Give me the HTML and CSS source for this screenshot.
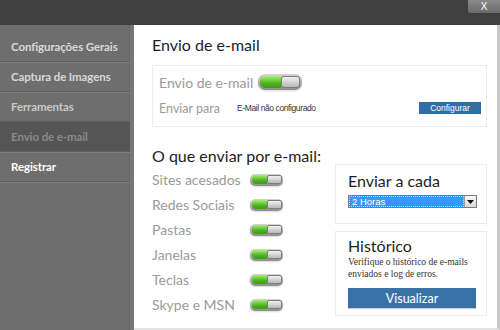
FILE: index.html
```html
<!DOCTYPE html>
<html lang="pt-BR">

<head>
    <meta charset="UTF-8">
    <meta name="viewport" content="width=device-width, initial-scale=1.0">
    <title>Envio de e-mail</title>
    <link rel="stylesheet" href="styles.css">
</head>

<body>
    <!-- barra superior -->
    <div class="top-bar">
        <button class="close-btn">X</button>
    </div>

    <div class="main">
        <!-- menu lateral -->
        <ul class="side-menu">
            <li class="item-1">Configurações Gerais</li>
            <li class="item-2">Captura de Imagens</li>
            <li class="item-3">Ferramentas</li>
            <li class="active">Envio de e-mail</li>
            <li class="register">Registrar</li>
        </ul>

        <!-- conteúdo -->
        <div class="content">
            <h1 class="title">Envio de e-mail</h1>

            <div class="box send-box">
                <div class="send-row">
                    <span class="send-label">Envio de e-mail</span>
                    <span class="toggle"><span class="on"></span><span class="knob"></span></span>
                </div>
                <div class="to-row">
                    <span class="to-label">Enviar para</span>
                    <span class="to-value">E-Mail não configurado</span>
                    <button class="btn-small">Configurar</button>
                </div>
            </div>

            <div class="columns">
                <div class="what">
                    <h2 class="title">O que enviar por e-mail:</h2>
                    <div class="opt"><span>Sites acesados</span><span class="toggle small"><span class="on"></span><span class="knob"></span></span></div>
                    <div class="opt"><span>Redes Sociais</span><span class="toggle small"><span class="on"></span><span class="knob"></span></span></div>
                    <div class="opt"><span>Pastas</span><span class="toggle small"><span class="on"></span><span class="knob"></span></span></div>
                    <div class="opt"><span>Janelas</span><span class="toggle small"><span class="on"></span><span class="knob"></span></span></div>
                    <div class="opt"><span>Teclas</span><span class="toggle small"><span class="on"></span><span class="knob"></span></span></div>
                    <div class="opt"><span>Skype e MSN</span><span class="toggle small"><span class="on"></span><span class="knob"></span></span></div>
                </div>

                <div class="side-boxes">
                    <div class="box interval-box">
                        <h3 class="box-title">Enviar a cada</h3>
                        <div class="select">
                            <span class="select-value">2 Horas</span>
                            <span class="select-arrow">
                                <svg width="7" height="4" viewBox="0 0 7 4"><path d="M0 0h7L3.5 4z" fill="#111"/></svg>
                            </span>
                        </div>
                    </div>
                    <div class="box history-box">
                        <h3 class="box-title">Histórico</h3>
                        <p class="history-text">Verifique o histórico de e-mails<br>enviados e log de erros.</p>
                        <button class="btn-big">Visualizar</button>
                    </div>
                </div>
            </div>
        </div>
    </div>
</body>
</html>
```

FILE: styles.css
```css
    /* base */
    body {
        margin: 0;
        width: 500px;
        height: 330px;
        overflow: hidden;
        font-family: 'Lato', 'Liberation Sans', sans-serif;
        background: #3f3f3f;
    }

    h1, h2, h3, p, ul {
        margin: 0;
        padding: 0;
    }

    button {
        font-family: inherit;
        border: none;
        cursor: pointer;
    }

    /* barra superior */
    .top-bar {
        height: 25px;
        display: flex;
        justify-content: flex-end;
        align-items: flex-start;
        background: #3f3f3f;
    }

    .close-btn {
        width: 32px;
        height: 13px;
        padding: 0;
        font-family: 'Liberation Sans', sans-serif;
        font-size: 10px;
        line-height: 13px;
        color: #fff;
        background: linear-gradient(#8a8a8a, #6a6a6a);
        border-radius: 0 0 0 3px;
    }

    .main {
        display: flex;
        height: 305px;
    }

    /* menu lateral */
    .side-menu {
        width: 130px;
        list-style: none;
        padding-top: 7px;
        background: #6e6e6e;
        border-right: 4px solid #777;
        box-shadow: inset -1px 0 #656565;
    }

    .side-menu li {
        height: 29px;
        line-height: 29px;
        padding-left: 11px;
        font-size: 11.5px;
        font-weight: bold;
        letter-spacing: -0.1px;
        color: #d8d8d8;
        border-bottom: 1px solid #5f5f5f;
        box-shadow: 0 1px #7d7d7d;
    }

    .side-menu .item-3 {
        color: #c8c8c8;
    }

    .side-menu .active {
        background: #555;
        color: #8a8a8a;
    }

    .side-menu .register {
        color: #fff;
    }

    /* conteúdo */
    .content {
        flex: 1;
        background: #fff;
        padding: 10px 10px 0 18px;
        border-right: 3px solid #c9c9c9;
        border-bottom: 2px solid #e3e3e3;
    }

    .title {
        font-size: 16px;
        font-weight: normal;
        line-height: 20px;
        color: #1e1e1e;
        white-space: nowrap;
    }

    .box {
        border: 1px solid #ececec;
        box-sizing: border-box;
    }

    .send-box {
        margin-top: 10px;
        height: 62px;
        padding: 6px 5px 0 6px;
    }

    .send-row {
        display: flex;
        align-items: center;
        height: 20px;
    }

    .send-label {
        font-size: 14px;
        color: #9a9a9a;
        width: 99px;
    }

    .to-row {
        display: flex;
        align-items: center;
        height: 16px;
        margin-top: 8px;
    }

    .to-label {
        font-size: 12.5px;
        color: #9a9a9a;
        width: 78px;
    }

    .to-value {
        flex: 1;
        font-family: 'Liberation Sans', sans-serif;
        font-size: 8.5px;
        color: #333;
        letter-spacing: -0.4px;
    }

    .btn-small {
        width: 62px;
        height: 12px;
        padding: 0;
        font-family: 'Liberation Sans', sans-serif;
        font-size: 8.5px;
        line-height: 12px;
        color: #fff;
        background: #2f6fa5;
    }

    /* interruptor */
    .toggle {
        display: inline-flex;
        width: 44px;
        height: 16px;
        padding: 2px;
        box-sizing: border-box;
        border-radius: 7px;
        background: linear-gradient(#d4d4d4, #8d8d8d);
        box-shadow: 0 1px 2px rgba(0,0,0,0.15);
    }

    .toggle .on {
        flex: 1;
        border-radius: 5px 0 0 5px;
        background: linear-gradient(#a8ee70, #4bb51f 60%, #3b9a16);
    }

    .toggle .knob {
        width: 19px;
        box-sizing: border-box;
        border: 1px solid #7c7c7c;
        border-radius: 3px;
        background: linear-gradient(#f2f2f2, #b8b8b8);
    }

    .toggle.small {
        width: 33px;
        height: 12px;
        padding: 1.5px;
        border-radius: 5px;
    }

    .toggle.small .on {
        border-radius: 4px 0 0 4px;
    }

    .toggle.small .knob {
        width: 15px;
        border-radius: 2px;
    }

    /* colunas */
    .columns {
        display: grid;
        grid-template-columns: 178px 152px;
        column-gap: 5px;
        margin-top: 19px;
    }

    .what .title {
        margin-bottom: 1px;
    }

    .opt {
        display: flex;
        align-items: center;
        height: 25px;
    }

    .opt span:first-child {
        width: 98px;
        font-size: 14px;
        color: #9a9a9a;
    }

    .side-boxes {
        display: flex;
        flex-direction: column;
        gap: 7px;
        margin-top: 18px;
    }

    .interval-box {
        height: 60px;
        padding: 7px 9px 0 12px;
    }

    .box-title {
        font-size: 16px;
        font-weight: normal;
        line-height: 18px;
        color: #1e1e1e;
    }

    .select {
        display: flex;
        height: 13px;
        margin-top: 5px;
        border: 1px solid #7a7a7a;
        box-sizing: border-box;
    }

    .select-value {
        flex: 1;
        font-family: 'Liberation Sans', sans-serif;
        font-size: 9.5px;
        line-height: 9px;
        padding-left: 2px;
        color: #fff;
        background: #3399ff;
        border: 1px dotted #ffd27a;
    }

    .select-arrow {
        width: 11px;
        display: flex;
        align-items: center;
        justify-content: center;
        background: linear-gradient(#fafafa, #d8d8d8);
        border-left: 1px solid #999;
    }

    .history-box {
        height: 85px;
        padding: 5px 11px 0 12px;
    }

    .history-text {
        font-family: 'Liberation Serif', serif;
        font-size: 9.5px;
        line-height: 12px;
        color: #333;
        margin-top: 1px;
    }

    .btn-big {
        width: 128px;
        height: 20px;
        margin-top: 8px;
        padding: 0;
        font-size: 12.5px;
        color: #fff;
        background: #3873a7;
        box-shadow: 0 1px 1px rgba(0,0,0,0.2);
    }
```
